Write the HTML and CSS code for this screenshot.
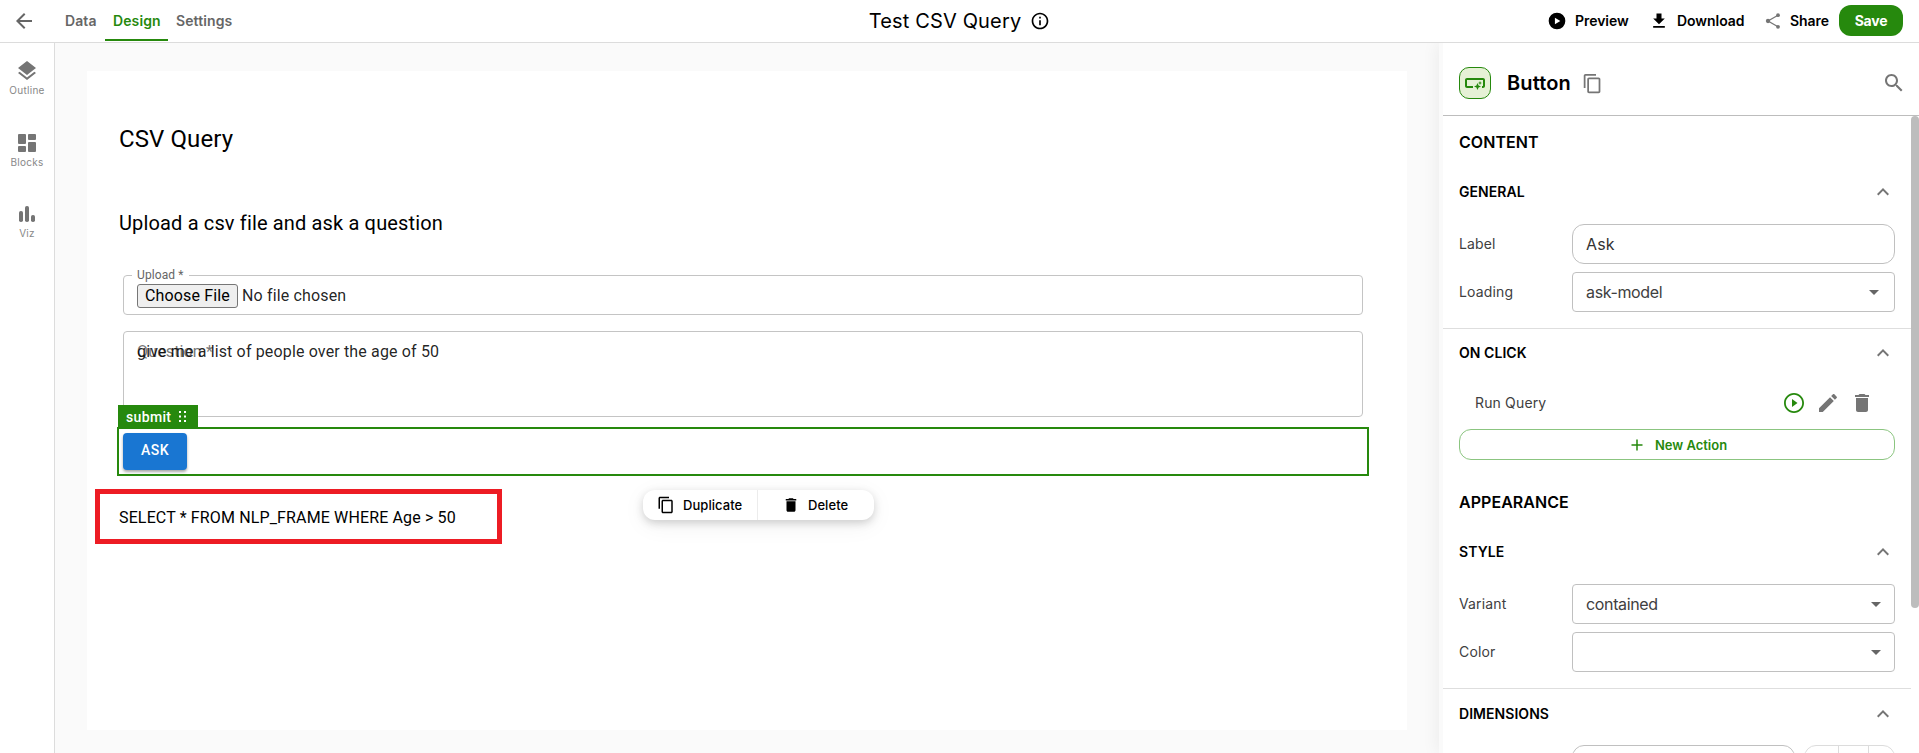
FILE: index.html
```html
<!DOCTYPE html>
<html lang="en">
<head>
<meta charset="utf-8">
<title>Test CSV Query</title>
<link rel="stylesheet" href="styles.css">
</head>
<body>
<svg class="defs" width="0" height="0" aria-hidden="true">
  <symbol id="up" viewBox="0 0 24 24"><path d="M12 8l-6 6 1.410 1.410L12 10.830l4.590 4.580L18 14z"/></symbol>
  <symbol id="down" viewBox="0 0 24 24"><path d="M7 10l5 5 5-5z"/></symbol>
  <symbol id="copy" viewBox="0 0 24 24"><path d="M16 1H4c-1.100 0-2 .9-2 2v14h2V3h12V1zm3 4H8c-1.100 0-2 .9-2 2v14c0 1.100.9 2 2 2h11c1.100 0 2-.9 2-2V7c0-1.100-.9-2-2-2zm0 16H8V7h11v14z"/></symbol>
  <symbol id="trash" viewBox="0 0 24 24"><path d="M6 19c0 1.100.9 2 2 2h8c1.100 0 2-.9 2-2V7H6v12zM19 4h-3.500l-1-1h-5l-1 1H5v2h14V4z"/></symbol>
</svg>
<div class="app">
  <header class="topbar">
    <nav class="tabs">
      <svg class="back" viewBox="0 0 24 24"><path d="M20 11H7.830l5.590-5.590L12 4l-8 8 8 8 1.410-1.410L7.830 13H20v-2z"/></svg>
      <a class="tab tab-data">Data</a>
      <a class="tab tab-design active">Design</a>
      <a class="tab tab-settings">Settings</a>
    </nav>
    <div class="title">
      <span class="title-text">Test CSV Query</span>
      <svg class="i20" viewBox="0 0 24 24"><path d="M11 7h2v2h-2zm0 4h2v6h-2zm1-9C6.480 2 2 6.480 2 12s4.480 10 10 10 10-4.480 10-10S17.520 2 12 2zm0 18c-4.410 0-8-3.590-8-8s3.590-8 8-8 8 3.590 8 8-3.590 8-8 8z"/></svg>
    </div>
    <div class="actions">
      <a class="action preview"><svg class="i20" viewBox="0 0 24 24"><path fill-rule="evenodd" d="M12 2a10 10 0 1 0 0 20 10 10 0 0 0 0-20zM9.500 8v8l6.500-4z"/></svg><span>Preview</span></a>
      <a class="action download"><svg class="i20" viewBox="0 0 24 24"><path d="M19 9h-4V3H9v6H5l7 7 7-7zM5 18v2h14v-2H5z"/></svg><span>Download</span></a>
      <a class="action share"><svg class="i20 grey" viewBox="0 0 24 24"><g><circle cx="6" cy="12" r="2.600"/><circle cx="18" cy="5" r="2.300"/><circle cx="18" cy="19" r="2.300"/><path d="M18 5L6 12l12 7" fill="none" stroke="#757575" stroke-width="1.500"/></g></svg><span>Share</span></a>
      <button class="save">Save</button>
    </div>
  </header>
  <div class="body">
    <aside class="rail">
      <a class="rail-item"><svg viewBox="0 0 24 24"><path d="M11.990 18.540l-7.370-5.730L3 14.070l9 7 9-7-1.630-1.270-7.380 5.740zM12 16l7.360-5.730L21 9l-9-7-9 7 1.630 1.270L12 16z"/></svg><span>Outline</span></a>
      <a class="rail-item"><svg viewBox="0 0 24 24"><rect x="3" y="3" width="8" height="10" rx="1"/><rect x="3" y="15" width="8" height="6" rx="1"/><rect x="13" y="3" width="8" height="6" rx="1"/><rect x="13" y="11" width="8" height="10" rx="1"/></svg><span>Blocks</span></a>
      <a class="rail-item"><svg viewBox="0 0 24 24"><rect x="4" y="8" width="4" height="11" rx="1.800"/><rect x="10" y="3" width="4" height="16" rx="1.800"/><rect x="16" y="12" width="4" height="7" rx="1.800"/></svg><span>Viz</span></a>
    </aside>
    <main class="stage">
      <section class="canvas">
        <h1>CSV Query</h1>
        <h2>Upload a csv file and ask a question</h2>
        <div class="field upload">
          <span class="floating">Upload *</span>
          <span class="choose">Choose File</span><span class="nofile">No file chosen</span>
        </div>
        <div class="field question">
          <span class="ghost">Question *</span>
          <span class="value">give me a list of people over the age of 50</span>
        </div>
        <div class="selected">
          <div class="tag"><span>submit</span><svg viewBox="0 0 8 12"><path d="M0 0h2v2H0zM5 0h2v2H5zM0 4.500h2v2H0zM5 4.500h2v2H5zM0 9h2v2H0zM5 9h2v2H5z"/></svg></div>
          <button class="ask">ASK</button>
          <div class="toolbar">
            <a class="tool dup"><svg viewBox="0 0 24 24"><use href="#copy"/></svg><span>Duplicate</span></a>
            <a class="tool del"><svg viewBox="0 0 24 24"><use href="#trash"/></svg><span>Delete</span></a>
          </div>
        </div>
        <p class="sql">SELECT * FROM NLP_FRAME WHERE Age &gt; 50</p>
        <div class="highlight"></div>
      </section>
    </main>
    <aside class="panel">
      <div class="panel-head">
        <span class="badge"><svg viewBox="0 0 24 24"><path d="M22 9v6c0 1.100-.9 2-2 2h-1v-2h1V9H4v6h6v2H4c-1.100 0-2-.9-2-2V9c0-1.100.9-2 2-2h16c1.100 0 2 .9 2 2zm-7.500 10l1.090-2.410L18 15.500l-2.410-1.090L14.500 12l-1.090 2.410L11 15.500l2.410 1.090L14.500 19zm2.500-5l.62-1.380L19 12l-1.380-.62L17 10l-.62 1.380L15 12l1.380.62L17 14z"/></svg></span>
        <span class="panel-title">Button</span>
        <svg class="head-copy" viewBox="0 0 24 24"><use href="#copy"/></svg>
        <svg class="search" viewBox="0 0 24 24"><path d="M15.500 14h-.79l-.28-.27C15.410 12.590 16 11.110 16 9.500 16 5.910 13.090 3 9.500 3S3 5.910 3 9.500 5.910 16 9.500 16c1.610 0 3.090-.59 4.230-1.570l.27.28v.79l5 4.990L20.490 19l-4.990-5zm-6 0C7.010 14 5 11.990 5 9.500S7.010 5 9.500 5 14 7.010 14 9.500 11.990 14 9.500 14z"/></svg>
      </div>
      <div class="panel-scroll">
        <div class="sections">
          <h3>CONTENT</h3>
          <section class="group general">
            <h4><span>GENERAL</span><svg viewBox="0 0 24 24"><use href="#up"/></svg></h4>
            <div class="row"><label>Label</label><div class="input round">Ask</div></div>
            <div class="row"><label>Loading</label><div class="input inset"><span>ask-model</span><svg viewBox="0 0 24 24"><use href="#down"/></svg></div></div>
          </section>
          <section class="group click">
            <h4><span>ON CLICK</span><svg viewBox="0 0 24 24"><use href="#up"/></svg></h4>
            <div class="run"><span class="run-name">Run Query</span>
              <svg class="green" viewBox="0 0 24 24"><path d="M10 16l5.500-4L10 8v8zM12 2C6.480 2 2 6.480 2 12s4.480 10 10 10 10-4.480 10-10S17.520 2 12 2zm0 18.200c-4.500 0-8.200-3.700-8.200-8.200S7.500 3.800 12 3.800s8.200 3.700 8.200 8.200-3.700 8.200-8.200 8.200z"/></svg>
              <svg viewBox="0 0 24 24"><path d="M3 17.250V21h3.750L17.810 9.940l-3.750-3.750L3 17.250zM20.710 7.040c.39-.39.39-1.020 0-1.410l-2.340-2.340c-.39-.39-1.020-.39-1.410 0l-1.830 1.830 3.750 3.750 1.830-1.830z"/></svg>
              <svg viewBox="0 0 24 24"><use href="#trash"/></svg>
            </div>
            <button class="new-action"><svg viewBox="0 0 20 20"><path d="M10 4.500v11M4.500 10h11" stroke="#26890d" stroke-width="1.500"/></svg><span>New Action</span></button>
          </section>
          <h3>APPEARANCE</h3>
          <section class="group style">
            <h4><span>STYLE</span><svg viewBox="0 0 24 24"><use href="#up"/></svg></h4>
            <div class="row"><label>Variant</label><div class="input"><span>contained</span><svg viewBox="0 0 24 24"><use href="#down"/></svg></div></div>
            <div class="row"><label>Color</label><div class="input"><span></span><svg viewBox="0 0 24 24"><use href="#down"/></svg></div></div>
          </section>
          <section class="group dims">
            <h4><span>DIMENSIONS</span><svg viewBox="0 0 24 24"><use href="#up"/></svg></h4>
            <div class="row"><label></label><div class="input round"></div><div class="units"><i></i><i></i><i></i></div></div>
          </section>
        </div>
        <div class="scrollbar"></div>
      </div>
    </aside>
  </div>
</div>
</body>
</html>
```
FILE: styles.css
```css
* { box-sizing: border-box; }
body { margin: 0; background: #fff; font-family: Inter, "Liberation Sans", sans-serif; color: #000; }
.defs { position: absolute; }
svg { display: block; flex: none; width: 24px; height: 24px; fill: currentColor; }
button { font: inherit; border: 0; padding: 0; margin: 0; }
.app { width: 1919px; height: 753px; overflow: hidden; display: flex; flex-direction: column; }

/* top bar */
.topbar { flex: none; height: 43px; border-bottom: 1px solid #dcdcdc; display: grid; grid-template-columns: 1fr auto 1fr; }
.tabs { display: flex; padding-left: 12px; }
.back { margin: 9px 21px 0 0; color: #666; }
.tab { height: 41px; line-height: 42px; padding: 0 8px; font-size: 14px; font-weight: 600; letter-spacing: .1px; color: #666; white-space: nowrap; }
.tab-data { width: 48px; }
.tab-design { width: 63px; color: #26890d; border-bottom: 2px solid #26890d; }
.title { display: flex; align-items: center; gap: 9px; }
.title-text { font-size: 20px; letter-spacing: .15px; }
.i20 { width: 20px; height: 20px; }
.actions { display: flex; justify-content: flex-end; align-items: center; padding-right: 16px; }
.action { display: flex; align-items: center; gap: 8px; font-size: 14px; font-weight: 600; line-height: 20px; white-space: nowrap; }
.action span { margin-top: -1px; letter-spacing: -.05px; }
.preview { width: 102px; }
.download { width: 114px; }
.share { width: 76px; gap: 7px; }
.grey { color: #757575; }
.save { width: 64px; height: 31px; margin-top: -1px; border-radius: 12px; background: #26890d; color: #fff; font-size: 14px; font-weight: 700; letter-spacing: -.2px; }

.body { flex: 1; display: flex; min-height: 0; }

/* left rail */
.rail { flex: none; width: 55px; border-right: 1px solid #dcdcdc; display: flex; flex-direction: column; gap: 34px; padding-top: 16px; color: #757575; }
.rail-item { height: 38px; display: flex; flex-direction: column; align-items: center; }
.rail-item span { font-size: 10px; line-height: 14px; letter-spacing: .3px; color: #888; }
.rail-item:last-child span { margin-top: -1px; }

/* canvas */
.stage { flex: 1; background: #fafafa; padding: 28px 32px 0; }
.canvas { position: relative; width: 1320px; height: 659px; background: #fff; padding: 52px 32px 0; font-family: Roboto, sans-serif; }
h1 { margin: 0; font-size: 24px; line-height: 32px; font-weight: 400; letter-spacing: .1px; }
h2 { margin: 56px 0 0; font-size: 20px; line-height: 24px; font-weight: 400; letter-spacing: .15px; }
.field { position: relative; width: 1240px; margin-left: 4px; border: 1px solid #c4c4c4; border-radius: 4px; font-size: 16px; letter-spacing: .15px; color: rgba(0,0,0,.87); }
.upload { height: 40px; margin-top: 40px; display: flex; align-items: center; padding: 1px 13px 0; }
.floating { position: absolute; left: 8px; top: -9px; padding: 0 5px; line-height: 16px; background: #fff; font-size: 12px; letter-spacing: .1px; color: #666; }
.choose { width: 101px; height: 24px; border: 1px solid #767676; border-radius: 3px; background: #efefef; color: #000; text-align: center; line-height: 22px; }
.nofile { margin-left: 4px; }
.question { height: 86px; margin-top: 16px; padding: 8px 13px; line-height: 23px; }
.ghost { position: absolute; color: #777; }
.value { position: relative; }
.selected { position: relative; width: 1252px; height: 49px; margin: 10px 0 0 -2px; border: 2px solid #26890d; padding: 4px; }
.tag { position: absolute; left: -1px; top: -24px; width: 80px; height: 24px; padding-left: 8px; background: #26890d; color: #fff; font-size: 14px; font-weight: 500; letter-spacing: .35px; line-height: 24px; display: flex; align-items: center; gap: 8px; }
.tag svg { width: 8px; height: 12px; }
.ask { display: block; width: 64px; height: 37px; border-radius: 4px; background: #1976d2; color: #fff; font-size: 14px; font-weight: 500; letter-spacing: .4px; line-height: 35px; padding-bottom: 2px; box-shadow: 0 2px 3px rgba(0,0,0,.35); }
.toolbar { position: absolute; left: 524px; top: 61px; width: 231px; height: 30px; border-radius: 12px; background: #fff; display: flex; box-shadow: 0 3px 8px rgba(0,0,0,.17), 0 5px 24px rgba(0,0,0,.06); font: 500 13px/30px Inter, sans-serif; letter-spacing: .05px; }
.tool { display: flex; align-items: center; }
.dup { width: 115px; padding-left: 14px; gap: 8px; border-right: 1px solid #ececec; }
.dup svg { width: 18px; height: 18px; }
.del { padding-left: 24px; gap: 8px; }
.del svg { width: 18px; height: 18px; }
.sql { margin: 30px 0 0; font-size: 16px; line-height: 24px; letter-spacing: .14px; }
.highlight { position: absolute; left: 8px; top: 418px; width: 407px; height: 55px; border: 5px solid #ed1c24; }

/* settings panel */
.panel { position: relative; flex: none; width: 480px; border-left: 4px solid #fafafa; background: #fff; box-shadow: -2px 0 16px rgba(0,0,0,.06); display: flex; flex-direction: column; clip-path: inset(0 0 0 -30px); }
.panel-head { flex: none; height: 73px; border-bottom: 1px solid #bdbdbd; padding: 8px 13px 0 16px; display: flex; align-items: center; }
.badge { width: 32px; height: 32px; border: 1px solid #26890d; border-radius: 10px; background: #e6f1d6; color: #26890d; display: grid; place-items: center; }
.panel-title { margin: 0 10px 0 16px; font-size: 20px; font-weight: 600; letter-spacing: .1px; }
.head-copy { width: 21px; height: 21px; margin-left: 1px; color: #757575; }
.search { margin-left: auto; color: #757575; }
.panel-scroll { flex: 1; min-height: 0; overflow: hidden; display: flex; }
.sections { flex: none; width: 468px; }
h3 { margin: 0; padding: 14px 16px 0; height: 48px; font-size: 16px; line-height: 24px; font-weight: 600; letter-spacing: .05px; }
.group { border-bottom: 1px solid #dedede; padding: 0 16px; }
.group h4 { margin: 0; height: 60px; padding: 0 0 5px; display: flex; align-items: center; justify-content: space-between; font-size: 14px; font-weight: 600; letter-spacing: .05px; }
.group h4 svg { width: 24px; height: 24px; color: #757575; }
.row { display: flex; align-items: center; height: 40px; margin-bottom: 8px; }
.row label { width: 113px; margin-top: -1px; font-size: 14px; letter-spacing: .15px; color: #404040; }
.input { flex: 1; height: 40px; border: 1px solid #c0c0c0; border-radius: 4px; padding: 0 6px 0 13px; display: flex; align-items: center; justify-content: space-between; font-size: 16px; letter-spacing: -.35px; color: #404040; }
.input.round { border-radius: 12px; color: #333; letter-spacing: .1px; }
.input.inset { padding-right: 8px; }
.input svg { color: #666; }
.general { height: 165px; }
.click { height: 147px; border: 0; }
.click h4 { height: 49px; padding: 0 0 2px; }
.run { height: 51px; padding: 0 21px 2px 16px; display: flex; align-items: center; gap: 10px; color: #757575; font-size: 14px; }
.run-name { margin-right: auto; color: #404040; letter-spacing: .15px; }
.green { color: #26890d; }
.new-action { width: 436px; height: 31px; border: 1px solid #8bc580; border-radius: 12px; background: #fff; color: #26890d; font-size: 13px; font-weight: 600; display: flex; align-items: center; justify-content: center; gap: 8px; }
.new-action svg { width: 20px; height: 20px; }
.style { height: 165px; }
.dims h4 { height: 56px; padding: 0 0 7px; }
.dims .input { flex: none; width: 223px; }
.units { margin-left: 9px; width: 91px; height: 40px; border: 1px solid #dcdcdc; border-radius: 12px; display: flex; }
.units i { width: 30px; border-right: 1px solid #dcdcdc; }
.units i:first-child { width: 34px; }
.units i:last-child { border: 0; width: 25px; }
.scrollbar { width: 8px; height: 492px; border-radius: 4px; background: #bdbdbd; }
```
